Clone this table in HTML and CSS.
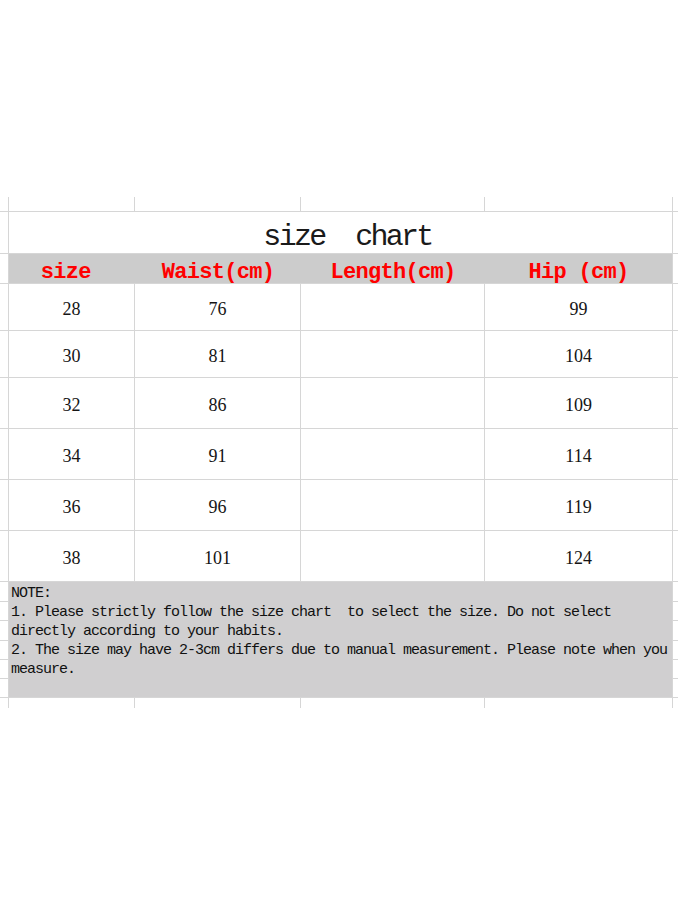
FILE: index.html
```html
<!DOCTYPE html>
<html>
<head>
<meta charset="utf-8">
<link rel="stylesheet" href="styles.css">
</head>
<body>
<div class="sheet">
  <!-- partial top row -->
  <div class="c"></div><div class="c"></div><div class="c"></div><div class="c"></div><div class="c"></div><div class="c nr"></div>

  <!-- title -->
  <div class="c"></div>
  <div class="c title"><span class="title-text">size  chart</span></div>
  <div class="c nr"></div>

  <!-- header -->
  <div class="c"></div>
  <div class="c head">
    <div class="hcell">size </div>
    <div class="hcell">Waist(cm)</div>
    <div class="hcell">Length(cm)</div>
    <div class="hcell">Hip (cm)</div>
  </div>
  <div class="c nr"></div>

  <!-- data rows -->
  <div class="c"></div><div class="c num">28</div><div class="c num">76</div><div class="c num"></div><div class="c num">99</div><div class="c nr"></div>
  <div class="c"></div><div class="c num">30</div><div class="c num">81</div><div class="c num"></div><div class="c num">104</div><div class="c nr"></div>
  <div class="c"></div><div class="c num">32</div><div class="c num">86</div><div class="c num"></div><div class="c num">109</div><div class="c nr"></div>
  <div class="c"></div><div class="c num">34</div><div class="c num">91</div><div class="c num"></div><div class="c num">114</div><div class="c nr"></div>
  <div class="c"></div><div class="c num">36</div><div class="c num">96</div><div class="c num"></div><div class="c num">119</div><div class="c nr"></div>
  <div class="c"></div><div class="c num">38</div><div class="c num">101</div><div class="c num"></div><div class="c num">124</div><div class="c nr"></div>

  <!-- note -->
  <div class="c note">
    <div class="nl">NOTE:</div>
    <div class="nl">1. Please strictly follow the size chart  to select the size. Do not select</div>
    <div class="nl">directly according to your habits.</div>
    <div class="nl">2. The size may have 2-3cm differs due to manual measurement. Please note when you</div>
    <div class="nl">measure.</div>
  </div>
  <div class="c first"></div><div class="c nr last"></div>
  <div class="c first"></div><div class="c nr last"></div>
  <div class="c first"></div><div class="c nr last"></div>
  <div class="c first"></div><div class="c nr last"></div>
  <div class="c first"></div><div class="c nr last"></div>
  <div class="c first"></div><div class="c nr last"></div>

  <!-- bottom partial row -->
  <div class="c nb"></div><div class="c nb"></div><div class="c nb"></div><div class="c nb"></div><div class="c nb"></div><div class="c nb nr"></div>
</div>
</body>
</html>
```

FILE: styles.css
```css
html, body {
  margin: 0;
  padding: 0;
  background: #ffffff;
}

body {
  width: 678px;
  height: 904px;
  overflow: hidden;
}

.sheet {
  margin-top: 197px;
  display: grid;
  grid-template-columns: 9px 126px 166px 184px 188px 5px;
  grid-template-rows: 15px 42px 30px 47px 47px 51px 51px 51px 51px 20px 19px 20px 19px 19px 19px 10px;
}

.c {
  box-sizing: border-box;
  border-right: 1px solid #d6d6d6;
  border-bottom: 1px solid #d6d6d6;
}

.c.nr {
  border-right: none;
}

.c.nb {
  border-bottom: none;
}

.first {
  grid-column: 1;
}

.last {
  grid-column: 6;
}

.title {
  grid-column: 2 / 6;
  display: flex;
  justify-content: center;
  align-items: flex-end;
  padding-left: 14px;
}

.title-text {
  font-family: "Liberation Mono", monospace;
  font-size: 30px;
  letter-spacing: -2.7px;
  line-height: 34px;
  color: #1a1a1a;
  white-space: pre;
  margin-bottom: -1px;
}

.head {
  grid-column: 2 / 6;
  background: #cccccc;
  display: grid;
  grid-template-columns: 126px 166px 184px 187px;
}

.hcell {
  display: flex;
  justify-content: center;
  padding-top: 7px;
  line-height: 23px;
  font-family: "Liberation Mono", monospace;
  font-weight: bold;
  font-size: 22px;
  letter-spacing: -0.7px;
  color: #ff0000;
  white-space: pre;
}

.num {
  display: flex;
  justify-content: center;
  align-items: center;
  padding-top: 4px;
  font-family: "Liberation Serif", serif;
  font-size: 18px;
  color: #151515;
}

.note {
  grid-column: 2 / 6;
  grid-row: 10 / 16;
  background: #d0cfd0;
  padding-left: 2px;
  padding-top: 2px;
  font-family: "Liberation Mono", monospace;
  font-size: 15px;
  letter-spacing: -1px;
  line-height: 19px;
  color: #111111;
}

.nl {
  white-space: pre;
}
```
